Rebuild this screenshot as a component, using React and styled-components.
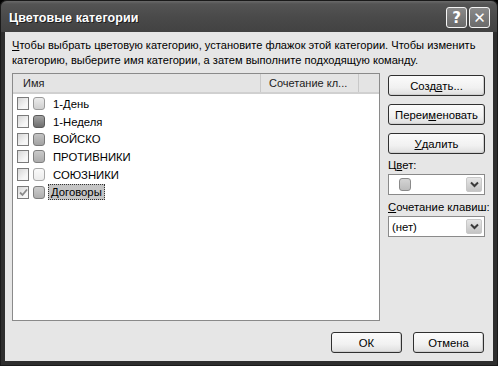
import React from 'react';
import styled, { createGlobalStyle } from 'styled-components';

const GlobalStyle = createGlobalStyle`
  html, body {
    margin: 0;
    padding: 0;
    background: #000;
  }
  * {
    box-sizing: border-box;
  }
`;

const Window = styled.div`
  width: 498px;
  height: 366px;
  display: flex;
  flex-direction: column;
  background: #2e2e2e;
  border: 1px solid #1a1a1a;
  border-radius: 6px 6px 0 0;
  padding: 0 4px 4px 4px;
  font-family: 'Liberation Sans', Arial, sans-serif;
  font-size: 11px;
  color: #000;
`;

const TitleBar = styled.div`
  height: 31px;
  display: flex;
  align-items: center;
  margin: 0 -4px;
  padding: 2px 7px 0 8px;
  background: linear-gradient(#6a6a6a 0, #545454 3px, #4a4a4a 50%, #424242 100%);
  border-radius: 6px 6px 0 0;
`;

const Title = styled.div`
  flex: 1;
  color: #fff;
  font-family: 'Liberation Sans', Arial, sans-serif;
  font-weight: bold;
  font-size: 12.5px;
  letter-spacing: 0.1px;
  text-shadow: 1px 1px 0 #1e1e1e;
`;

const CaptionButton = styled.div`
  width: 21px;
  height: 21px;
  margin-left: 2px;
  border: 1px solid #f4f4f4;
  border-radius: 3px;
  background: linear-gradient(#8a8a8a, #6a6a6a);
  display: flex;
  align-items: center;
  justify-content: center;
  color: #fff;
  font-family: 'DejaVu Sans', sans-serif;
  font-weight: bold;
  font-size: 15px;
`;

const Body = styled.div`
  flex: 1;
  background: #e6e6e6;
  display: flex;
  flex-direction: column;
  padding: 6px 8px 8px 7px;
`;

const Intro = styled.p`
  margin: 0 0 6px 0;
  line-height: 14.5px;
  font-size: 11.1px;
  white-space: nowrap;
`;

const Key = styled.span`
  text-decoration: underline;
`;

const Main = styled.div`
  display: flex;
  gap: 8px;
  height: 248px;
`;

const ListBox = styled.div`
  width: 368px;
  background: #fff;
  border: 1px solid #8a8a8a;
  display: flex;
  flex-direction: column;
`;

const Header = styled.div`
  height: 20px;
  display: flex;
  background: #e4e4e4;
  border-bottom: 2px solid #d0d0d0;
`;

const HeaderCell = styled.div`
  width: ${(p) => p.$w}px;
  padding-left: ${(p) => p.$pad}px;
  display: flex;
  align-items: center;
  border-right: 1px solid #c8c8c8;
  color: #222;
`;

const Rows = styled.div`
  padding: 1px 0 0 4px;
`;

const Row = styled.div`
  height: 17.7px;
  display: flex;
  align-items: center;
`;

const Check = styled.div`
  width: 12px;
  height: 13px;
  border: 1px solid #7a7a7a;
  background: linear-gradient(135deg, #d6d6d6, #f6f6f6 70%);
  display: flex;
  align-items: center;
  justify-content: center;
`;

const Swatch = styled.div`
  width: 12px;
  height: 13px;
  margin-left: ${(p) => (p.$inline ? 0 : 4)}px;
  border: 1px solid ${(p) => p.$edge};
  border-radius: 3px;
  background: linear-gradient(${(p) => p.$top}, ${(p) => p.$bottom});
`;

const Name = styled.div`
  padding: 1px 2px;
  font-size: 11.3px;
  border: 1px dotted ${(p) => (p.$selected ? '#333' : 'transparent')};
  background: ${(p) => (p.$selected ? '#c4c4c4' : 'transparent')};
  margin-left: ${(p) => (p.$selected ? '3px' : '5px')};
`;

const Side = styled.div`
  width: 97px;
  display: flex;
  flex-direction: column;
  padding-top: 2px;
`;

const Button = styled.div`
  width: ${(p) => p.$w || 97}px;
  height: 21px;
  margin-bottom: ${(p) => p.$mb || 0}px;
  border: 1px solid #303030;
  border-radius: 3px;
  background: linear-gradient(#fbfbfb, #f1f1f1 60%, #dedede);
  box-shadow: inset -1px -1px 0 #cfcfcf;
  display: flex;
  align-items: center;
  justify-content: center;
  font-size: 11.3px;
`;

const Label = styled.div`
  margin: ${(p) => p.$m};
  font-size: 11.3px;
  white-space: nowrap;
`;

const Combo = styled.div`
  height: 21px;
  background: #fff;
  border: 1px solid #8a8a8a;
  display: flex;
  align-items: center;
  padding: 2px;
  font-size: 11.3px;
`;

const ComboValue = styled.div`
  flex: 1;
  display: flex;
  align-items: center;
  padding-left: ${(p) => p.$pad}px;
`;

const DropButton = styled.div`
  width: 16px;
  height: 15px;
  border: 1px solid #c8c8c8;
  border-radius: 2px;
  background: linear-gradient(#e6e6e6, #c4c4c4);
  display: flex;
  align-items: center;
  justify-content: center;
`;

const Footer = styled.div`
  margin-top: auto;
  display: flex;
  justify-content: flex-end;
  gap: 11px;
  padding-right: 1px;
`;

const Chevron = () => (
  <svg width="9" height="7" viewBox="0 0 9 7">
    <path d="M1 1.5 L4.5 5 L8 1.5" fill="none" stroke="#3a3a3a" strokeWidth="2" />
  </svg>
);

const Tick = () => (
  <svg width="9" height="9" viewBox="0 0 9 9">
    <path d="M1 4.5 L3.5 7 L8 1.5" fill="none" stroke="#8a8a8a" strokeWidth="1.8" />
  </svg>
);

const categories = [
  { name: '1-День', top: '#ececec', bottom: '#cfcfcf', edge: '#9a9a9a' },
  { name: '1-Неделя', top: '#a4a4a4', bottom: '#6e6e6e', edge: '#5a5a5a' },
  { name: 'ВОЙСКО', top: '#c4c4c4', bottom: '#a2a2a2', edge: '#7a7a7a' },
  { name: 'ПРОТИВНИКИ', top: '#cacaca', bottom: '#acacac', edge: '#808080' },
  { name: 'СОЮЗНИКИ', top: '#fafafa', bottom: '#ececec', edge: '#a8a8a8' },
  { name: 'Договоры', top: '#cdcdcd', bottom: '#aeaeae', edge: '#7e7e7e', checked: true, selected: true },
];

export default function App() {
  return (
    <>
      <GlobalStyle />
      <Window>
        <TitleBar>
          <Title>Цветовые категории</Title>
          <CaptionButton>?</CaptionButton>
          <CaptionButton>✕</CaptionButton>
        </TitleBar>
        <Body>
          <Intro>
            <Key>Ч</Key>тобы выбрать цветовую категорию, установите флажок этой категории. Чтобы изменить
            <br />
            категорию, выберите имя категории, а затем выполните подходящую команду.
          </Intro>
          <Main>
            <ListBox>
              <Header>
                <HeaderCell $w={248} $pad={10}>Имя</HeaderCell>
                <HeaderCell $w={98} $pad={8}>Сочетание кл...</HeaderCell>
              </Header>
              <Rows>
                {categories.map((c) => (
                  <Row key={c.name}>
                    <Check>{c.checked && <Tick />}</Check>
                    <Swatch $top={c.top} $bottom={c.bottom} $edge={c.edge} />
                    <Name $selected={c.selected}>{c.name}</Name>
                  </Row>
                ))}
              </Rows>
            </ListBox>
            <Side>
              <Button $mb={8}>
                Созд<Key>а</Key>ть...
              </Button>
              <Button $mb={8}>
                Переи<Key>м</Key>еновать
              </Button>
              <Button>
                <Key>У</Key>далить
              </Button>
              <Label $m="5px 0 3px 0">
                Ц<Key>в</Key>ет:
              </Label>
              <Combo>
                <ComboValue $pad={8}>
                  <Swatch $inline $top="#d4d4d4" $bottom="#bcbcbc" $edge="#8a8a8a" />
                </ComboValue>
                <DropButton>
                  <Chevron />
                </DropButton>
              </Combo>
              <Label $m="6px 0 3px 0">
                <Key>С</Key>очетание клавиш:
              </Label>
              <Combo>
                <ComboValue $pad={1}>(нет)</ComboValue>
                <DropButton>
                  <Chevron />
                </DropButton>
              </Combo>
            </Side>
          </Main>
          <Footer>
            <Button $w={71}>ОК</Button>
            <Button $w={71}>Отмена</Button>
          </Footer>
        </Body>
      </Window>
    </>
  );
}
